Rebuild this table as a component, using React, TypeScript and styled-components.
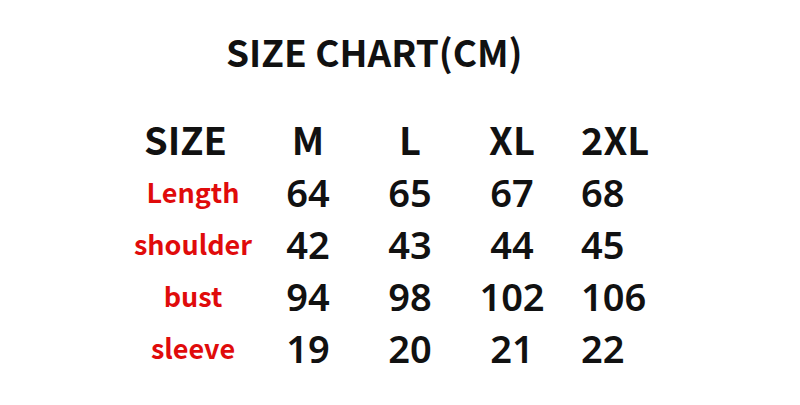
import React from "react";
import styled, { createGlobalStyle, css } from "styled-components";

const Global = createGlobalStyle`
  html, body { margin: 0; padding: 0; background: #ffffff; }
  body { width: 800px; height: 405px; overflow: hidden; }
`;

const Page = styled.div`
  width: 800px;
  height: 405px;
  box-sizing: border-box;
  padding-top: 25px;
  background: #ffffff;
  display: flex;
  flex-direction: column;
`;

const Title = styled.h1`
  margin: 0 0 0 226px;
  height: 52px;
  line-height: 52px;
  font-family: "Noto Sans CJK SC", "Noto Sans", sans-serif;
  font-weight: 700;
  font-size: 37px;
  color: #111111;
`;

const Chart = styled.div`
  margin: 35px 0 0 129px;
  display: grid;
  grid-template-columns: 128px repeat(4, 102px);
  grid-template-rows: 54px;
  grid-auto-rows: 52px;
  align-items: center;
`;

type Align = "center" | "start" | "left";

const alignCss = (a?: Align) => {
  if (a === "start") return css`text-align: left; padding-left: 15px;`;
  if (a === "left") return css`text-align: left; padding-left: 18px;`;
  return css`text-align: center;`;
};

const HeadCell = styled.div<{ $align?: Align }>`
  ${(p) => alignCss(p.$align)}
  font-family: "Noto Sans CJK SC", "Noto Sans", sans-serif;
  font-weight: 700;
  font-size: 38px;
  line-height: 52px;
  color: #111111;
`;

const Label = styled.div`
  text-align: center;
  font-family: "Noto Sans CJK SC", "Noto Sans", sans-serif;
  font-weight: 700;
  font-size: 27px;
  line-height: 52px;
  color: #e00b0b;
`;

const Value = styled.div<{ $align?: Align }>`
  ${(p) => alignCss(p.$align)}
  font-family: "Noto Sans", sans-serif;
  font-weight: 600;
  font-size: 38px;
  line-height: 52px;
  color: #111111;
`;

const sizes = ["M", "L", "XL", "2XL"];
const rows: { name: string; values: number[] }[] = [
  { name: "Length", values: [64, 65, 67, 68] },
  { name: "shoulder", values: [42, 43, 44, 45] },
  { name: "bust", values: [94, 98, 102, 106] },
  { name: "sleeve", values: [19, 20, 21, 22] },
];

const colAlign = (i: number): Align => (i === 3 ? "left" : "center");

export default function App() {
  return (
    <>
      <Global />
      <Page>
        <Title>SIZE CHART(CM)</Title>
        <Chart>
          <HeadCell $align="start">SIZE</HeadCell>
          {sizes.map((s, i) => (
            <HeadCell key={s} $align={colAlign(i)}>
              {s}
            </HeadCell>
          ))}
          {rows.map((r) => (
            <React.Fragment key={r.name}>
              <Label>{r.name}</Label>
              {r.values.map((v, i) => (
                <Value key={i} $align={colAlign(i)}>
                  {v}
                </Value>
              ))}
            </React.Fragment>
          ))}
        </Chart>
      </Page>
    </>
  );
}
